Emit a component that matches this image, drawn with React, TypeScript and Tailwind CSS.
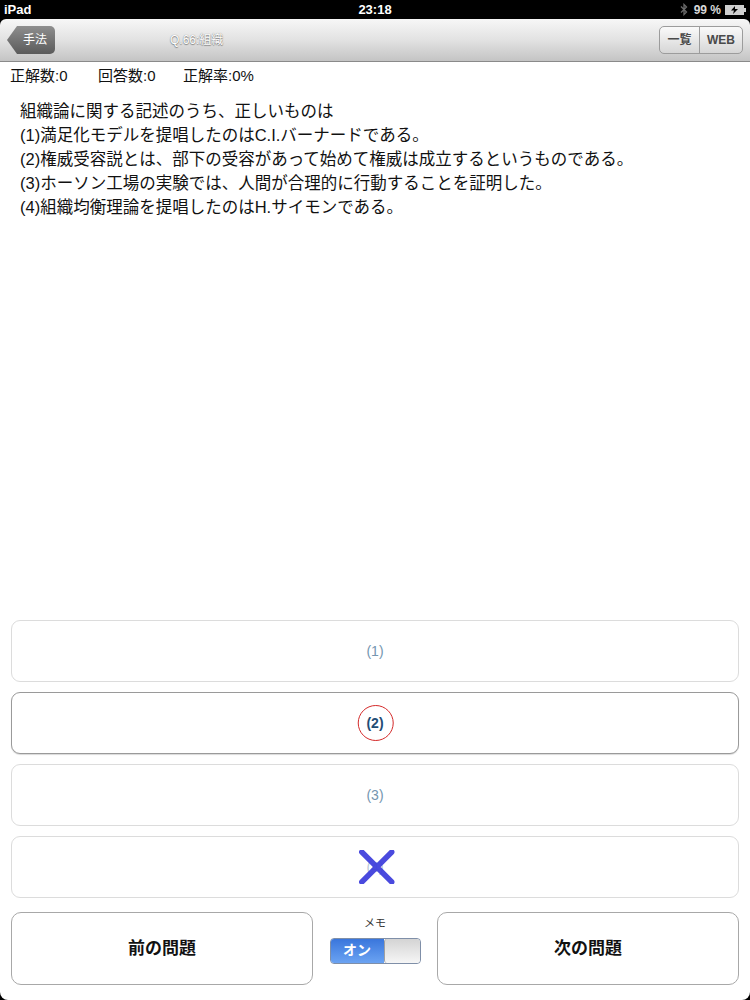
import React from "react";

const font = "font-['Liberation_Sans','Noto_Sans_CJK_JP',sans-serif]";

const StatusBar = () => (
  <div className="relative flex h-[19px] items-center justify-between bg-black px-[4px] text-[13px] font-bold text-white">
    <span>iPad</span>
    <span className="absolute left-1/2 -translate-x-1/2">23:18</span>
    <div className="flex items-center gap-[4px] text-[12px] text-[#d8d8d8]">
      <svg width="8" height="13" viewBox="0 0 8 13" fill="none" stroke="#6a6a6a" strokeWidth="1.3">
        <path d="M1 3.5l5.5 5.5L4 11.5V1.5L6.5 4 1 9.5" />
      </svg>
      <span className="ml-[2px]">99 %</span>
      <div className="flex items-center">
        <div className="relative flex h-[10px] w-[19px] items-center justify-center border border-[#cfcfcf] bg-[#cfcfcf]">
          <svg width="9" height="8" viewBox="0 0 9 8">
            <path d="M5 0L1 4.5h3L3 8l5-5H5z" fill="#000" />
          </svg>
        </div>
        <div className="h-[4px] w-[2px] bg-[#cfcfcf]" />
      </div>
    </div>
  </div>
);

const NavBar = () => (
  <div className="bg-black">
    <div className="relative flex h-[43px] items-center justify-between rounded-t-[6px] border-b border-[#8a8a8a] bg-gradient-to-b from-[#f7f7f7] via-[#e2e2e2] to-[#c4c4c4] px-[7px]">
      <div className="flex h-[28px] items-stretch">
        <div className="flex h-[28px] w-[48px] items-center justify-center bg-gradient-to-b from-[#8e8e8e] to-[#5b5b5b] pl-[8px] text-[12px] text-white [clip-path:polygon(10px_0,100%_0,100%_100%,10px_100%,0_50%)] rounded-r-[5px]">
          手法
        </div>
      </div>
      <span className="absolute left-[170px] text-[12px] text-white [text-shadow:0_0_1px_#777,0_1px_1px_#888]">
        Q.66:組織
      </span>
      <div className="flex h-[28px] overflow-hidden rounded-[5px] border border-[#9c9c9c] bg-gradient-to-b from-[#fafafa] to-[#d6d6d6] text-[12px] font-bold text-[#4a4a4a]">
        <div className="flex w-[40px] items-center justify-center border-r border-[#9c9c9c]">一覧</div>
        <div className="flex w-[42px] items-center justify-center">WEB</div>
      </div>
    </div>
  </div>
);

const Option = ({ label, selected, crossed }: { label: string; selected?: boolean; crossed?: boolean }) => (
  <div
    className={
      "relative flex h-[62px] items-center justify-center rounded-[9px] border bg-white " +
      (selected ? "border-[#9a9a9a] shadow-[0_1px_1px_rgba(0,0,0,0.15)]" : "border-[#dcdcdc]")
    }
  >
    <span className={selected ? "text-[14px] font-bold text-[#1f4d75]" : crossed ? "text-[14px] text-[#b9c8d6]" : "text-[14px] text-[#7596b0]"}>
      {label}
    </span>
    {selected && (
      <div className="absolute left-1/2 top-1/2 h-[36px] w-[36px] -translate-x-[48%] -translate-y-1/2 rounded-full border-[1.5px] border-[#d42a2a]" />
    )}
    {crossed && (
      <svg className="absolute left-1/2 top-1/2 -translate-x-[45%] -translate-y-1/2" width="36" height="34" viewBox="0 0 36 34">
        <path d="M3 2L33 32M33 2L3 32" stroke="#3b3bdc" strokeWidth="5.5" strokeLinecap="round" opacity="0.92" />
      </svg>
    )}
  </div>
);

const App = () => {
  return (
    <div className={`flex h-[1000px] w-[750px] flex-col bg-black ${font}`}>
      <StatusBar />
      <NavBar />
      <div className="flex flex-1 flex-col rounded-b-[8px] bg-white">
        <div className="flex h-[25px] items-end pl-[10px] text-[15px] text-[#111]">
          <span className="w-[88px]">正解数:0</span>
          <span className="w-[85px]">回答数:0</span>
          <span>正解率:0%</span>
        </div>
        <div className="mt-[12px] pl-[20px] text-[16.5px] leading-[24px] text-[#111]">
          <p>組織論に関する記述のうち、正しいものは</p>
          <p>(1)満足化モデルを提唱したのはC.I.バーナードである。</p>
          <p>(2)権威受容説とは、部下の受容があって始めて権威は成立するというものである。</p>
          <p>(3)ホーソン工場の実験では、人間が合理的に行動することを証明した。</p>
          <p>(4)組織均衡理論を提唱したのはH.サイモンである。</p>
        </div>
        <div className="flex-1" />
        <div className="mx-[11px] flex flex-col gap-[10px]">
          <Option label="(1)" />
          <Option label="(2)" selected />
          <Option label="(3)" />
          <Option label="(4)" crossed />
        </div>
        <div className="mx-[11px] mb-[15px] mt-[14px] flex h-[73px] items-stretch">
          <div className="flex w-[302px] items-center justify-center rounded-[10px] border border-[#a8a8a8] text-[17px] font-bold text-[#111]">
            前の問題
          </div>
          <div className="flex flex-1 flex-col items-center pt-[3px]">
            <span className="text-[11px] text-[#333]">メモ</span>
            <div className="mt-[6px] flex h-[26px] w-[91px] overflow-hidden rounded-[4px] border border-[#7f8fa8]">
              <div className="flex w-[53px] items-center justify-center bg-gradient-to-b from-[#3a76dc] to-[#6ba3f2] text-[14px] font-bold text-white">
                オン
              </div>
              <div className="flex-1 rounded-[3px] border-l border-[#a0a0a0] bg-gradient-to-b from-[#d4d4d4] to-[#f6f6f6]" />
            </div>
          </div>
          <div className="flex w-[302px] items-center justify-center rounded-[10px] border border-[#a8a8a8] text-[17px] font-bold text-[#111]">
            次の問題
          </div>
        </div>
      </div>
    </div>
  );
};

export default App;
